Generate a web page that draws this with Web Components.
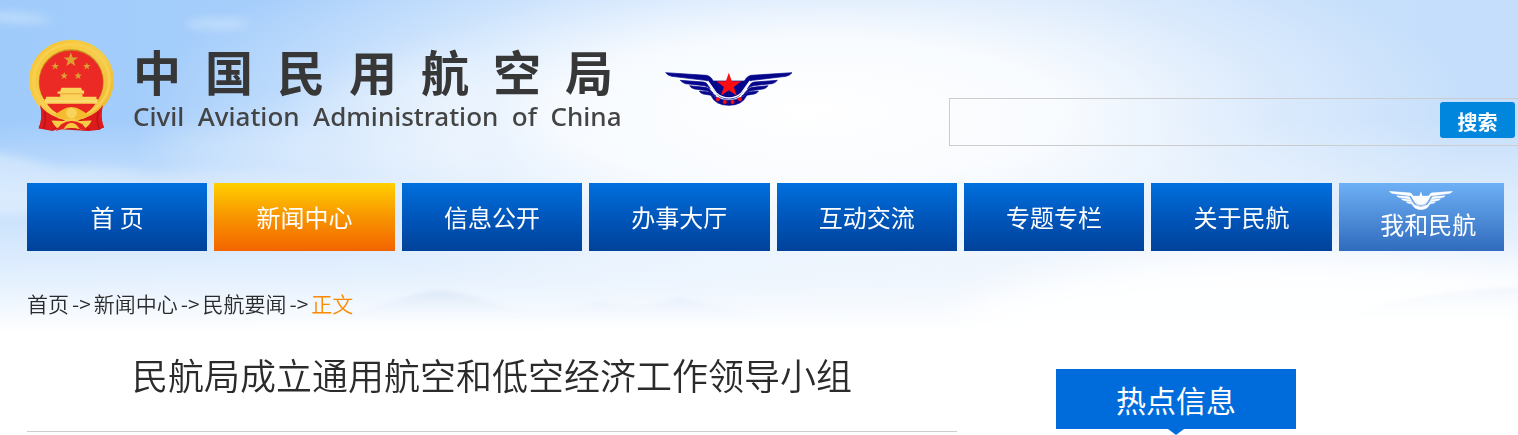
<!DOCTYPE html>
<html lang="zh-CN">
<head>
<meta charset="utf-8">
<title>中国民用航空局</title>
<style>
  body {
    margin: 0;
    font-family: "Noto Sans CJK SC", sans-serif;
    color: #2b2b2b;
    background: #fff;
  }
</style>
</head>
<body>
<caac-page>
  <caac-brand slot="header"></caac-brand>
  <caac-search slot="header"></caac-search>

  <caac-nav slot="nav">
    <caac-tab href="#home">首 页</caac-tab>
    <caac-tab href="#news" active>新闻中心</caac-tab>
    <caac-tab href="#open">信息公开</caac-tab>
    <caac-tab href="#service">办事大厅</caac-tab>
    <caac-tab href="#talk">互动交流</caac-tab>
    <caac-tab href="#topics">专题专栏</caac-tab>
    <caac-tab href="#about">关于民航</caac-tab>
    <caac-tab href="#me" light><caac-wings slot="icon" plain></caac-wings>我和民航</caac-tab>
  </caac-nav>

  <caac-crumbs slot="crumbs"></caac-crumbs>
  <caac-article slot="article">民航局成立通用航空和低空经济工作领导小组</caac-article>
  <caac-hot slot="aside">热点信息</caac-hot>
</caac-page>

<script>
class BaseElement extends HTMLElement {
  constructor() {
    super()
    this.attachShadow({ mode: 'open' })
  }

  connectedCallback() {
    this.shadowRoot.innerHTML = this.render()
  }
}

class CaacPage extends BaseElement {
  render() {
    return `
      <style>
        :host {
          display: block;
          position: relative;
        }

        caac-sky {
          position: absolute;
          inset: 0 0 auto 0;
          z-index: -1;
        }

        header {
          display: flex;
          justify-content: space-between;
          align-items: flex-start;
          padding: 39px 0 37px 28px;
        }

        .inner {
          padding: 0 14px 0 27px;
        }

        .columns {
          display: grid;
          grid-template-columns: 930fr 448fr;
          column-gap: 99px;
          align-items: start;
        }
      </style>

      <caac-sky></caac-sky>
      <header><slot name="header"></slot></header>
      <div class="inner">
        <slot name="nav"></slot>
        <slot name="crumbs"></slot>
        <div class="columns">
          <slot name="article"></slot>
          <slot name="aside"></slot>
        </div>
      </div>
    `
  }
}

class CaacSky extends BaseElement {
  render() {
    return `
      <style>
        :host {
          display: block;
          height: 335px;
          background:
            linear-gradient(rgba(255, 255, 255, 0) 62%, rgba(255, 255, 255, 0.55) 85%, #fff 99%),
            radial-gradient(44% 58% at 53% 33%, #fff 0%, rgba(255, 255, 255, 0.88) 38%, rgba(255, 255, 255, 0.35) 70%, rgba(255, 255, 255, 0) 100%),
            linear-gradient(rgba(255, 255, 255, 0) 36%, rgba(255, 255, 255, 0.42) 58%),
            linear-gradient(90deg, #9fcbfb 0%, #a8cffb 22%, #b9d8fc 45%, #cbe1fb 70%, #c4defb 100%);
        }

        svg {
          display: block;
          width: 100%;
          height: 100%;
        }
      </style>

      <svg viewBox="0 0 1518 335" preserveAspectRatio="none" aria-hidden="true">
        <defs>
          <filter id="soft" x="-30%" y="-60%" width="160%" height="220%"><feGaussianBlur stdDeviation="18"/></filter>
          <filter id="wisp" x="-30%" y="-60%" width="160%" height="220%"><feGaussianBlur stdDeviation="5"/></filter>
          <filter id="edge"><feGaussianBlur stdDeviation="2"/></filter>
          <linearGradient id="bank" x1="0" y1="0" x2="1" y2="0">
            <stop offset="0" stop-color="#fff" stop-opacity=".35"/>
            <stop offset="1" stop-color="#fff" stop-opacity="0"/>
          </linearGradient>
          <linearGradient id="hill" x1="0" y1="0" x2="0" y2="1">
            <stop offset="0" stop-color="#c6d9f2" stop-opacity=".45"/>
            <stop offset="1" stop-color="#fff" stop-opacity="0"/>
          </linearGradient>
        </defs>
        <g fill="#fff" filter="url(#wisp)">
          <path d="M-10 12 Q30 12 56 20 Q30 26 -10 20Z" opacity=".35"/>
          <path d="M185 22 Q220 14 250 22 Q245 32 190 28Z" opacity=".3"/>
          <path d="M-20 150 Q20 156 60 168 Q110 164 150 174 Q260 164 340 180 H600 V215 H-20Z" fill="url(#bank)"/>
        </g>
        <g fill="#fff" filter="url(#soft)">
          <path d="M150 140 Q240 124 300 110 Q360 50 480 60 V180 Q320 176 150 152Z" opacity=".3"/>
          <path d="M960 310 Q1080 256 1250 250 Q1420 254 1600 275 V340 H960Z" opacity=".9"/>
        </g>
        <g fill="url(#hill)" filter="url(#edge)">
          <path d="M320 325 Q370 306 395 301 Q430 288 450 292 Q480 296 500 305 Q550 315 600 302 Q640 311 680 298 Q710 304 760 315 L820 325Z"/>
          <path d="M1330 322 Q1390 296 1440 294 Q1480 288 1540 286 V325Z" opacity=".5"/>
        </g>
      </svg>
    `
  }
}

class CaacEmblem extends BaseElement {
  render() {
    return `
      <style>
        :host {
          display: block;
          flex: none;
        }

        svg {
          display: block;
          width: 87px;
          height: 93px;
        }
      </style>

      <svg viewBox="25 25 260 280" role="img" aria-label="国徽">
        <defs>
          <linearGradient id="gold" x1="0" y1="0" x2="1" y2="1">
            <stop offset="0" stop-color="#f7c52f"/>
            <stop offset=".5" stop-color="#f5cd4c"/>
            <stop offset="1" stop-color="#edb52a"/>
          </linearGradient>
          <path id="star" d="M0-10 2.4-3.2 9.5-3.1 3.8 1.2 5.9 8.1 0 4 -5.9 8.1 -3.8 1.2 -9.5-3.1 -2.4-3.2Z"/>
        </defs>
        <path d="M62 222 Q70 262 56 294 L98 302 L112 296 L205 302 L240 298 L252 290 Q240 258 248 222Z" fill="#cf1418"/>
        <ellipse cx="155" cy="149" rx="128" ry="122" fill="url(#gold)"/>
        <ellipse cx="155" cy="149" rx="114" ry="108" fill="none" stroke="#f9cf50" stroke-width="8"/>
        <circle cx="154" cy="154" r="98" fill="#c98a1d"/>
        <circle cx="154" cy="156" r="96" fill="#eb2a25"/>
        <g fill="#dba22f">
          <use href="#star" transform="translate(153 88) scale(2.3)"/>
          <use href="#star" transform="translate(106 107) scale(1.2)"/>
          <use href="#star" transform="translate(201 107) scale(1.2)"/>
          <use href="#star" transform="translate(133 136) scale(1.2)"/>
          <use href="#star" transform="translate(175 136) scale(1.2)"/>
        </g>
        <g fill="#fbd45c">
          <path d="M124 172H184L187 180H193V190H188V199H230V206H234V220H74V206H78V199H121V190H113V183H121Z"/>
          <path d="M122 190H188" stroke="#e9a434" stroke-width="3"/>
          <path d="M76 212H232" stroke="#fbe08a" stroke-width="3"/>
        </g>
        <path d="M82 221H226Q214 243 190 252L176 244 160 231H148L132 244 120 252Q96 243 82 221Z" fill="#e92622"/>
        <path d="M124 240Q155 220 186 240L205 252 192 264H118L104 252Z" fill="#f5bd2e"/>
        <circle cx="155" cy="248" r="16" fill="#f8d45c"/>
        <path d="M60 224Q78 250 112 262L124 270 98 300 56 294Q70 262 60 224Z" fill="#dc1b1c"/>
        <path d="M250 224Q232 250 198 262L186 270 212 300 253 292Q240 262 250 224Z" fill="#dc1b1c"/>
        <path d="M74 244Q80 270 70 296M236 244Q228 270 238 294" fill="none" stroke="#b91215" stroke-width="4"/>
        <path d="M95 270 130 272Q155 258 180 272L216 270Q204 294 184 298L155 279 125 298Q105 294 95 270Z" fill="#f7cd48"/>
        <path d="M106 302 124 282Q155 262 188 282L204 302 178 295Q155 288 132 295Z" fill="#e32320"/>
        <path d="M130 297Q155 258 180 297Q155 289 130 297Z" fill="#f5c640"/>
      </svg>
    `
  }
}

class CaacWings extends BaseElement {
  render() {
    const plain = this.hasAttribute('plain')
    const wing = plain ? '#fff' : '#06068c'
    const accent = plain ? '#fff' : '#fb0d12'
    const line = plain ? '#5796df' : '#f4f8ff'

    return `
      <style>
        :host {
          display: block;
          flex: none;
        }

        svg {
          display: block;
          width: ${plain ? 64 : 128}px;
          height: ${plain ? 19 : 34}px;
        }
      </style>

      <svg viewBox="30 35 385 102" preserveAspectRatio="none" role="img" aria-label="民航徽标">
        <g id="side" fill="${wing}" stroke="${wing}" stroke-width="2">
          <path d="M32 37 155 45Q163 46 170 54L190 87Q202 105 222 105V116Q194 116 181 95L163 66Q159 61 151 60L50 48Q38 45 32 37Z"/>
          <path d="M76 60 145 65Q155 66 160 76L166 85Q158 78 148 76L92 70Q82 68 76 60Z"/>
          <path d="M104 76 153 81Q163 83 169 92L175 99Q166 93 156 91L119 86Q109 84 104 76Z"/>
          <path d="M133 92 164 95Q173 97 184 108Q173 105 145 101Q137 99 133 92Z"/>
          <path d="M168 105Q178 107 187 112Q203 120 222 120V135Q181 135 168 105Z"/>
          <path d="M163 62H222V108Q203 107 190 88Z"/>
        </g>
        <use href="#side" transform="matrix(-1 0 0 1 444 0)"/>
        <path d="M158 62 185 99Q200 113 222 113T259 99L286 62" fill="none" stroke="${line}" stroke-width="4"/>
        <path d="M222 37 231 63H259L237 80 246 106 222 90 198 106 207 80 185 63H213Z" fill="${accent}"/>
        <g fill="${accent}">
          <circle cx="189" cy="117" r="6"/>
          <circle cx="210" cy="125" r="6"/>
          <circle cx="233" cy="125" r="6"/>
          <circle cx="255" cy="117" r="6"/>
        </g>
      </svg>
    `
  }
}

class CaacBrand extends BaseElement {
  render() {
    return `
      <style>
        :host {
          display: flex;
          align-items: flex-start;
          color: #373737;
        }

        h1,
        p {
          margin: 0;
          white-space: pre;
        }

        h1 {
          font-family: "Liberation Sans", "Noto Sans CJK SC", sans-serif;
          font-size: 48px;
          line-height: 56px;
          font-weight: 700;
        }

        p {
          font-family: "Noto Sans", sans-serif;
          font-size: 26px;
          line-height: 26px;
          font-weight: 500;
          color: #444;
        }

        .names {
          padding: 8px 43px 0 18px;
        }

        caac-wings {
          padding-top: 33px;
        }
      </style>

      <caac-emblem></caac-emblem>
      <div class="names">
        <h1>中&ensp;国&ensp;民&ensp;用&ensp;航&ensp;空&ensp;局</h1>
        <p>Civil  Aviation  Administration  of  China</p>
      </div>
      <caac-wings></caac-wings>
    `
  }
}

class CaacSearch extends BaseElement {
  render() {
    return `
      <style>
        :host {
          display: block;
          width: 569px;
          padding-top: 59px;
        }

        form {
          display: flex;
          height: 48px;
          box-sizing: border-box;
          padding: 3px 3px 7px 0;
          border: 1px solid #ccc;
          border-right: 0;
        }

        input {
          flex: 1;
          min-width: 0;
          padding: 0 12px;
          border: 0;
          outline: 0;
          background: none;
          font: inherit;
          font-size: 20px;
        }

        button {
          width: 75px;
          padding: 4px 0 0;
          border: 0;
          border-radius: 3px;
          background: #0086dc;
          color: #fff;
          font: inherit;
          font-size: 20px;
          font-weight: 700;
          line-height: 32px;
        }
      </style>

      <form>
        <input type="text" aria-label="搜索">
        <button type="button">搜索</button>
      </form>
    `
  }
}

class CaacNav extends BaseElement {
  render() {
    return `
      <style>
        nav {
          display: grid;
          grid-template-columns: repeat(7, 12fr) 11fr;
          column-gap: 7px;
        }
      </style>

      <nav><slot></slot></nav>
    `
  }
}

class CaacTab extends BaseElement {
  render() {
    return `
      <style>
        :host {
          display: block;
        }

        a {
          display: flex;
          flex-direction: column;
          align-items: center;
          justify-content: center;
          height: 68px;
          box-sizing: border-box;
          background: linear-gradient(#0070de, #0054b8 55%, #00429a);
          color: #fff;
          font-size: 24px;
          line-height: 32px;
          text-decoration: none;
        }

        :host([active]) a {
          background: linear-gradient(#ffd000, #f89400 50%, #f26400);
        }

        :host([light]) a {
          justify-content: flex-start;
          padding-top: 8px;
          background: linear-gradient(#6eb0f5, #306bbd);
          line-height: 28px;
        }

        :host([light]) span {
          padding-left: 14px;
        }
      </style>

      <a href="${this.getAttribute('href')}"><slot name="icon"></slot><span><slot></slot></span></a>
    `
  }
}

class CaacCrumbs extends BaseElement {
  render() {
    return `
      <style>
        nav {
          display: flex;
          gap: 3px;
          padding: 36px 0 28px;
          font-size: 21px;
          line-height: 32px;
          font-weight: 350;
        }

        a {
          color: inherit;
          text-decoration: none;
        }

        .current {
          color: #fb8a00;
        }
      </style>

      <nav>
        <a href="#home">首页</a><span>-&gt;</span><a href="#news">新闻中心</a><span>-&gt;</span><a href="#headlines">民航要闻</a><span>-&gt;</span><span class="current">正文</span>
      </nav>
    `
  }
}

class CaacArticle extends BaseElement {
  render() {
    return `
      <style>
        h2 {
          margin: 0;
          padding: 1px 0 31px;
          border-bottom: 1px solid #ccc;
          font-size: 36px;
          line-height: 52px;
          font-weight: 350;
          text-align: center;
        }
      </style>

      <h2><slot></slot></h2>
    `
  }
}

class CaacHot extends BaseElement {
  render() {
    return `
      <style>
        :host {
          display: block;
          padding: 22px 0 6px;
        }

        h3 {
          position: relative;
          width: 240px;
          margin: 0;
          background: #006cdc;
          color: #fff;
          font-size: 30px;
          line-height: 60px;
          font-weight: 400;
          text-align: center;
        }

        /* pointer under the label */
        h3::after {
          content: "";
          position: absolute;
          top: 100%;
          left: 50%;
          margin-left: -8px;
          border: 8px solid transparent;
          border-top: 6px solid #006cdc;
          border-bottom: 0;
        }
      </style>

      <h3><slot></slot></h3>
    `
  }
}

customElements.define('caac-sky', CaacSky)
customElements.define('caac-emblem', CaacEmblem)
customElements.define('caac-wings', CaacWings)
customElements.define('caac-brand', CaacBrand)
customElements.define('caac-search', CaacSearch)
customElements.define('caac-nav', CaacNav)
customElements.define('caac-tab', CaacTab)
customElements.define('caac-crumbs', CaacCrumbs)
customElements.define('caac-article', CaacArticle)
customElements.define('caac-hot', CaacHot)
customElements.define('caac-page', CaacPage)
</script>
</body>
</html>
